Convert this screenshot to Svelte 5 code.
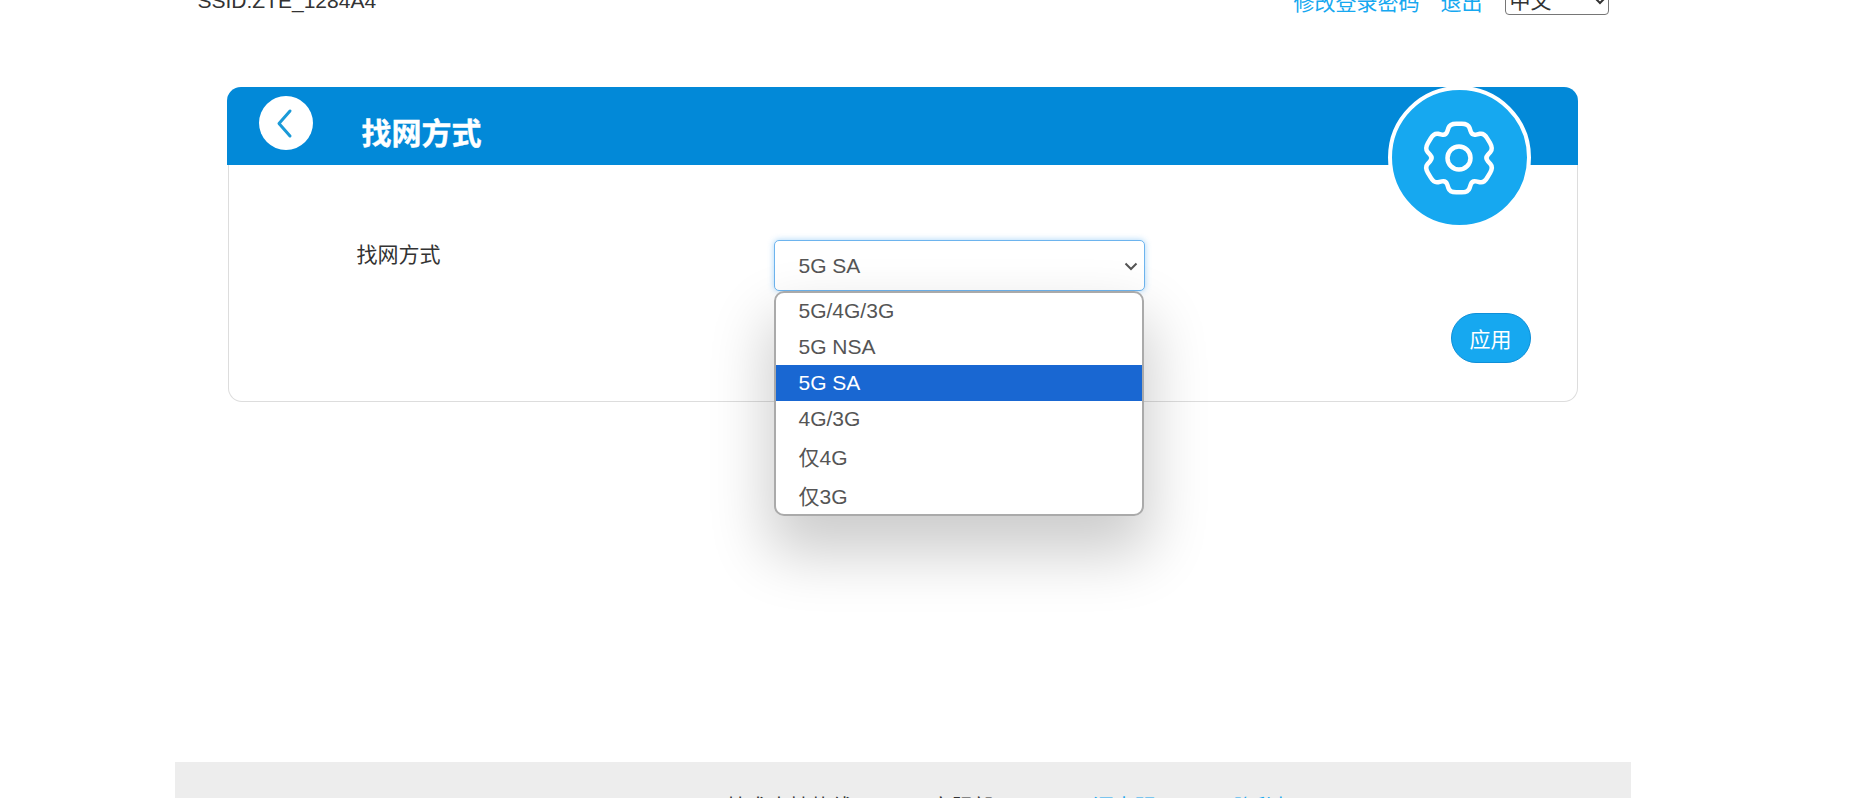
<script>
    const modes = ["5G/4G/3G", "5G NSA", "5G SA", "4G/3G", "仅4G", "仅3G"];
    let current = "5G SA";

    // six teeth, outline rounded with quadratic corners
    function gearPath(cx, cy, rTooth, rValley, spread) {
        const pts = [];
        for (let i = 0; i < 6; i++) {
            const a = -90 + i * 60;
            for (const [deg, r] of [[a - spread, rTooth], [a + spread, rTooth], [a + 30, rValley]]) {
                const t = (deg * Math.PI) / 180;
                pts.push([cx + r * Math.cos(t), cy + r * Math.sin(t)]);
            }
        }
        const mix = (p, q, k) => [p[0] + (q[0] - p[0]) * k, p[1] + (q[1] - p[1]) * k];
        let d = "";
        pts.forEach((p, i) => {
            const prev = pts[(i + pts.length - 1) % pts.length];
            const next = pts[(i + 1) % pts.length];
            const a = mix(p, prev, 0.35);
            const b = mix(p, next, 0.35);
            d += `${i ? "L" : "M"}${a[0].toFixed(1)} ${a[1].toFixed(1)}Q${p[0].toFixed(1)} ${p[1].toFixed(1)} ${b[0].toFixed(1)} ${b[1].toFixed(1)}`;
        });
        return d + "Z";
    }

    const gear = gearPath(40, 40, 35.5, 26, 15);
</script>

<div class="viewport">
    <div class="page">
        <div class="top">
            <span class="ssid">SSID:ZTE_1284A4</span>
            <div class="top-right">
                <a href="#pwd">修改登录密码</a>
                <a href="#logout">退出</a>
                <select class="lang">
                    <option>中文</option>
                    <option>English</option>
                </select>
            </div>
        </div>

        <div class="card">
            <div class="card-head">
                <button class="back" aria-label="返回">
                    <svg width="54" height="54" viewBox="0 0 54 54">
                        <path d="M31 15 L20 27.5 L31 40" fill="none" stroke="#1a9ad8" stroke-width="3" stroke-linecap="round" stroke-linejoin="round" />
                    </svg>
                </button>
                <h2>找网方式</h2>
                <div class="gear">
                    <svg width="80" height="80" viewBox="0 0 80 80" fill="none" stroke="#fff" stroke-width="4.5" stroke-linejoin="round">
                        <circle cx="40" cy="40" r="11.5" />
                        <path d={gear} />
                    </svg>
                </div>
            </div>
            <div class="card-body">
                <div class="row">
                    <label for="net-mode">找网方式</label>
                    <div class="field">
                        <div class="select-box" id="net-mode">
                            <span>{current}</span>
                            <svg width="16" height="16" viewBox="0 0 16 16">
                                <path d="M2.5 5.5 L8 11 L13.5 5.5" fill="none" stroke="#555" stroke-width="2" />
                            </svg>
                        </div>
                        <ul class="popup">
                            {#each modes as m}
                                <li class:active={m === current} class:cjk={m.startsWith("仅")}>{m}</li>
                            {/each}
                        </ul>
                    </div>
                </div>
                <div class="actions">
                    <button class="apply">应用</button>
                </div>
            </div>
        </div>

        <div class="footer">
            <span>技术支持热线</span>
            <span>客服部</span>
            <a href="#license">开源声明</a>
            <a href="#privacy">隐私权</a>
        </div>
    </div>
</div>

<style>
    :global(body) {
        margin: 0;
        background: #fff;
    }

    .viewport {
        height: 798px;
        overflow: hidden;
        padding-right: 44px;
        font-family: "Liberation Sans", "Noto Sans CJK SC", sans-serif;
        font-size: 21px;
        color: #333;
    }

    /* the page in the shot is scrolled down a little */
    .page {
        width: 1456px;
        margin: -21px auto 0;
    }

    a {
        color: #16a8f0;
        text-decoration: none;
    }

    .top {
        display: flex;
        justify-content: space-between;
        align-items: center;
        height: 43px;
        padding: 0 22px 0 23px;
    }

    .top-right {
        display: flex;
        align-items: center;
        gap: 21px;
    }

    .lang {
        width: 104px;
        height: 28px;
        font-size: 21px;
        font-family: inherit;
        background: #fff;
        color: #333;
        border-radius: 4px;
        margin-left: 1px;
    }

    .card {
        margin: 65px 53px 0 52px;
        height: 315px;
        position: relative;
    }

    .card-head {
        height: 78px;
        background: #0289d8;
        border-radius: 14px 14px 0 0;
        position: relative;
        display: flex;
        align-items: flex-start;
    }

    .card-head h2 {
        margin: 29px 0 0 49px;
        font-size: 30px;
        line-height: 36px;
        font-weight: bold;
        color: #fff;
        -webkit-text-stroke: 0.4px #fff;
    }

    .back {
        width: 54px;
        height: 54px;
        margin: 9px 0 0 32px;
        padding: 0;
        border: none;
        border-radius: 50%;
        background: #fff;
        display: flex;
    }

    .gear {
        position: absolute;
        top: 0;
        right: 47px;
        width: 135px;
        height: 135px;
        border-radius: 50%;
        border: 4px solid #fff;
        background: #16a8f0;
        display: flex;
        align-items: center;
        justify-content: center;
        margin-top: -1px;
    }

    .card-body {
        height: 237px;
        box-sizing: border-box;
        margin-left: 1px;
        border: 1px solid #ddd;
        border-top: none;
        border-radius: 0 0 14px 14px;
        padding: 75px 46px 0 128px;
    }

    .row {
        display: flex;
        align-items: flex-start;
    }

    label {
        width: 417px;
        line-height: 30px;
    }

    .field {
        position: relative;
        width: 371px;
    }

    .select-box {
        height: 51px;
        box-sizing: border-box;
        border: 1px solid #6db4ee;
        border-radius: 5px;
        box-shadow: 0 0 6px rgba(60, 160, 240, 0.45);
        background: #fff;
        color: #555;
        padding: 0 5px 0 24px;
        display: flex;
        align-items: center;
        justify-content: space-between;
    }

    .popup {
        position: absolute;
        z-index: 5;
        top: 51px;
        left: 0;
        right: 1px;
        margin: 0;
        padding: 0;
        list-style: none;
        height: 225px;
        box-sizing: border-box;
        overflow: hidden;
        background: #fff;
        border: 2px solid #aaa;
        border-radius: 10px;
        box-shadow: 0 32px 60px 6px rgba(0, 0, 0, 0.2);
        color: #555;
    }

    .popup li {
        height: 36px;
        line-height: 36px;
        padding-left: 23px;
    }

    .popup li.cjk {
        height: 39px;
        line-height: 42px;
    }

    .popup li.active {
        background: #1967d2;
        color: #fff;
    }

    .actions {
        display: flex;
        justify-content: flex-end;
        margin-top: 22px;
    }

    .apply {
        width: 80px;
        height: 50px;
        border: 1px solid #0f8fd8;
        border-radius: 25px;
        background: #16a8f0;
        color: #fff;
        font-size: 21px;
        font-family: inherit;
        padding: 0;
    }

    .footer {
        margin-top: 360px;
        height: 60px;
        background: #ededed;
        padding: 28px 0 0 552px;
        box-sizing: border-box;
        display: flex;
        gap: 78px;
    }
</style>
